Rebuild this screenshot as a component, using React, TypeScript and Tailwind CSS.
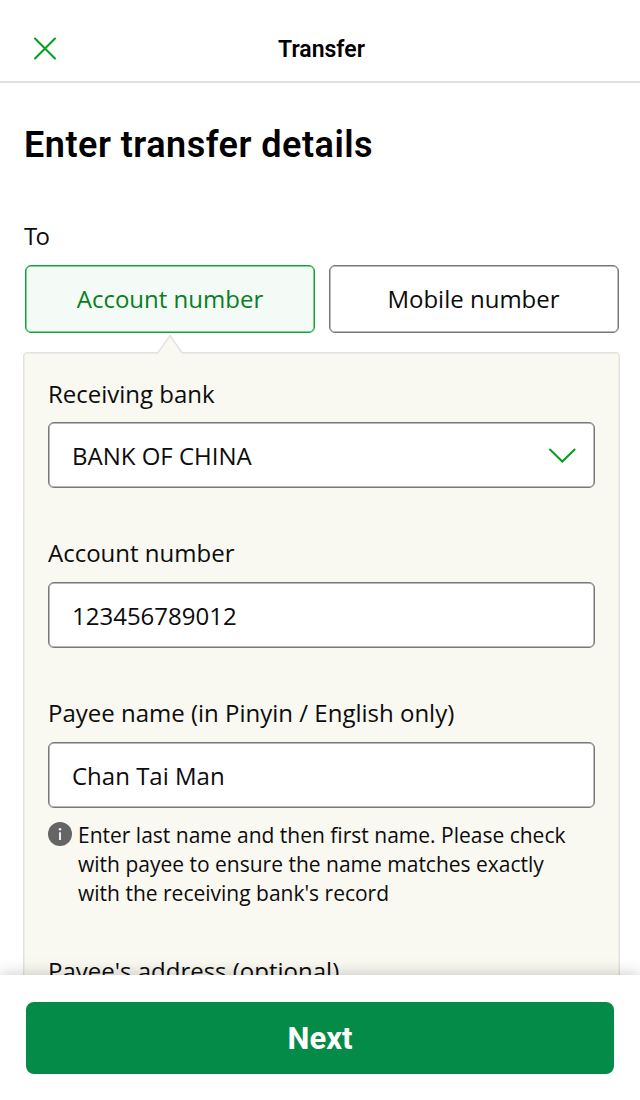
import type { ReactNode } from "react";

function Line({ children, className = "" }: { children: ReactNode; className?: string }) {
  return <span className={`block whitespace-nowrap ${className}`}>{children}</span>;
}

type FieldProps = { label: string; value: string; icon?: ReactNode; gap?: string };

function Field({ label, value, icon, gap = "gap-[13px]" }: FieldProps) {
  return (
    <div className={`flex flex-col ${gap}`}>
      <label className="flex h-8 items-center whitespace-nowrap text-[24px] leading-8">{label}</label>
      <div className="flex h-[66px] items-center justify-between rounded-md border border-[#77777b] bg-white pt-px pr-[17px] pl-[23px] text-[24px] shadow-[inset_0_0_0_0.5px_#77777b]">
        <span className="whitespace-nowrap">{value}</span>
        {icon}
      </div>
    </div>
  );
}

export default function App() {
  return (
    <div className="flex h-[1100px] w-[640px] flex-col overflow-hidden bg-white font-['Open_Sans',sans-serif] text-[#0c0c0c]">
      <header className="grid h-[83px] shrink-0 grid-cols-[88px_1fr_88px] items-center border-b-2 border-[#e0e0e0] pt-4">
        <button aria-label="Close" className="ml-[33px] w-6">
          <svg width="24" height="24" viewBox="0 0 24 24" fill="none" stroke="#00a01e" strokeWidth="2" strokeLinecap="round">
            <path d="M2 1.5 22 21.5M22 1.5 2 21.5" />
          </svg>
        </button>
        <h1 className="pt-[3px] pl-[3px] text-center font-['Roboto',sans-serif] text-[23px] font-semibold text-black">
          <Line>Transfer</Line>
        </h1>
      </header>

      <main className="flex min-h-0 flex-1 flex-col overflow-hidden">
        <h2 className="mt-[38px] ml-6 font-['Roboto',sans-serif] text-[36px] leading-12 font-semibold tracking-[0.5px] text-black">
          <Line>Enter transfer details</Line>
        </h2>
        <p className="mt-[51px] ml-6 text-[24px] leading-8 tracking-[-1.6px]">To</p>
        <div className="mt-[13px] ml-[25px] grid w-[594px] grid-cols-2 gap-[14px] text-[24px]">
          <button className="h-[68px] rounded-md border border-[#10a43a] bg-[#f4faf6] text-[#087f23] shadow-[inset_0_0_0_0.5px_#10a43a]">
            Account number
          </button>
          <button className="h-[68px] rounded-md border border-[#77777b] bg-white pr-px shadow-[inset_0_0_0_0.5px_#77777b]">
            Mobile number
          </button>
        </div>

        <section className="relative mt-[19px] ml-[23px] flex h-[700px] w-[597px] shrink-0 flex-col gap-[49px] rounded-t border border-[#e2e2e2] bg-[#f9f8f1] px-6 pt-[25px] shadow-[inset_0_0_0_0.5px_#e2e2e2]">
          <svg className="absolute -top-[18px] left-[132px]" width="28" height="20" viewBox="0 0 28 20">
            <path d="M1.5 18 14 0.5 26.5 18V20H1.5Z" fill="#f9f8f1" />
            <path d="M1 17.8H1.8L14 0.5 26.2 17.8H27" fill="none" stroke="#e0e0e0" strokeWidth="1.4" />
          </svg>
          <Field
            label="Receiving bank"
            value="BANK OF CHINA"
            gap="gap-3"
            icon={
              <svg width="30" height="18" viewBox="0 0 30 18" fill="none" stroke="#00a01e" strokeWidth="2" strokeLinecap="round">
                <path d="M3 2.5 15.3 14.5 27.6 2.5" />
              </svg>
            }
          />
          <Field label="Account number" value="123456789012" />
          <div>
            <Field label="Payee name (in Pinyin / English only)" value="Chan Tai Man" />
            <div className="mt-[13px] flex gap-[6px] text-[21px] leading-[29px]">
              <svg className="mt-px shrink-0" width="24" height="24" viewBox="0 0 24 24">
                <circle cx="12" cy="12" r="12" fill="#656565" />
                <circle cx="12" cy="7.2" r="1.3" fill="#eee" />
                <path d="M12 10.2V18" stroke="#eee" strokeWidth="2" />
              </svg>
              <p>
                <Line>Enter last name and then first name. Please check</Line>
                <Line>with payee to ensure the name matches exactly</Line>
                <Line>with the receiving bank's record</Line>
              </p>
            </div>
            <label className="mt-[47px] block text-[24px] leading-8">Payee's address (optional)</label>
          </div>
        </section>
      </main>

      <footer className="relative h-[125px] shrink-0 bg-white px-[26px] pt-[27px] shadow-[0_-2px_14px_rgba(0,0,0,0.18)]">
        <button className="h-[72px] w-[588px] rounded-lg bg-[#038b47] pt-[2px] font-['Roboto',sans-serif] text-[31px] font-bold text-white">
          Next
        </button>
      </footer>
    </div>
  );
}
